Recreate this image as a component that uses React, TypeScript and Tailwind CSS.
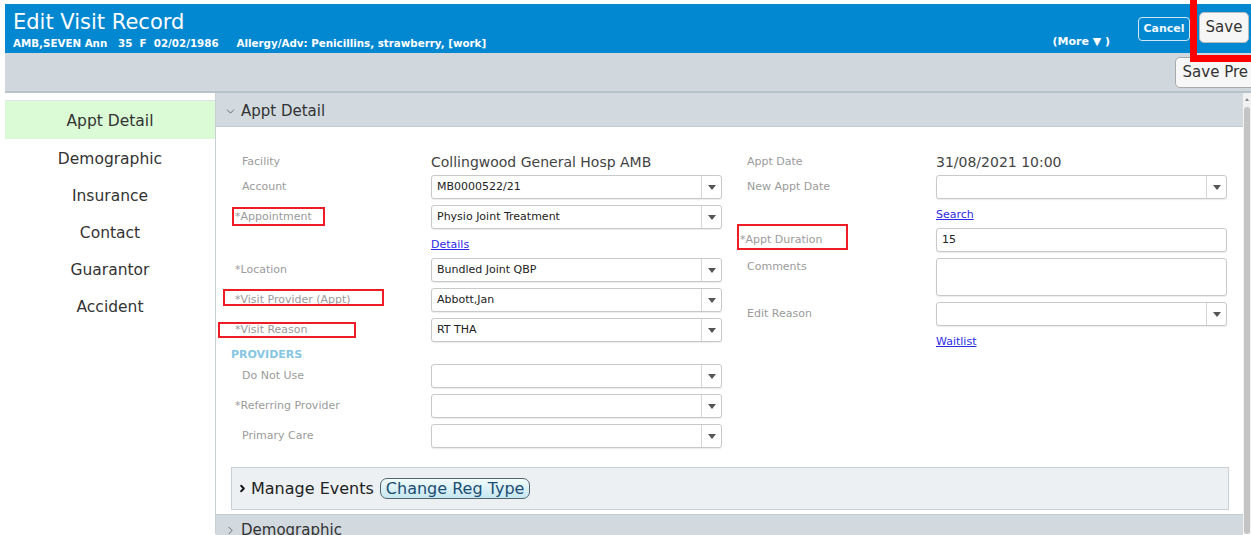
import { ChevronDown, ChevronRight } from "lucide-react";
import type { ReactNode } from "react";

const NAV = ["Demographic", "Insurance", "Contact", "Guarantor", "Accident"];

function Caret() {
  return (
    <span className="h-0 w-0 border-x-[4px] border-t-[5px] border-x-transparent border-t-[#555]" />
  );
}

function Select({ value }: { value?: string }) {
  return (
    <div className="flex h-[24px] w-[291px] items-stretch rounded-[3px] border border-[#c9c9c9] bg-white shadow-[0_1px_1px_rgba(0,0,0,0.08)]">
      <div className="flex flex-1 items-center pl-[5px] text-[11px] text-[#222]">{value}</div>
      <div className="flex w-[20px] items-center justify-center border-l border-[#d6d6d6]">
        <Caret />
      </div>
    </div>
  );
}

function Input({ value, tall }: { value?: string; tall?: boolean }) {
  return (
    <div
      className={`flex w-[291px] rounded-[3px] border border-[#c9c9c9] bg-white pl-[5px] text-[11px] text-[#222] shadow-[0_1px_1px_rgba(0,0,0,0.08)] ${
        tall ? "h-[38px] items-start" : "h-[24px] items-center"
      }`}
    >
      {value}
    </div>
  );
}

function Label({ text, req }: { text: string; req?: boolean }) {
  return (
    <div className="w-[189px] shrink-0 text-[11px] text-[#9b9b9b]">
      {req && <span className="-ml-[7px]">*</span>}
      {text}
    </div>
  );
}

function Row({ className, children }: { className?: string; children: ReactNode }) {
  return <div className={`flex items-center ${className ?? ""}`}>{children}</div>;
}

function LinkRow({ className, text }: { className?: string; text: string }) {
  return (
    <div className={`flex h-[16px] items-center pl-[189px] ${className ?? ""}`}>
      <a className="text-[11px] text-[#2b2be6] underline">{text}</a>
    </div>
  );
}

export default function App() {
  return (
    <div className="relative h-[535px] w-[1251px] overflow-hidden bg-white pl-[5px] pt-[4px] font-['DejaVu_Sans',Verdana,sans-serif]">
      {/* Title bar */}
      <header className="flex h-[49px] bg-[#0288d1] text-white">
        <div className="pl-[8px] pt-[6px]">
          <div className="text-[21px] leading-[24px]">Edit Visit Record</div>
          <div className="mt-[3px] whitespace-pre text-[10.3px] font-bold leading-[12px]">
            {"AMB,SEVEN Ann   35  F  02/02/1986     Allergy/Adv: Penicillins, strawberry, [work]"}
          </div>
        </div>
        <div className="ml-auto flex items-start">
          <span className="mr-[28px] mt-[32px] text-[11px] font-bold leading-[12px]">(More ▼ )</span>
          <button className="mt-[13px] h-[24px] w-[52px] rounded-[4px] border border-[#cfe6f4] text-[11px] font-bold text-[#eef7fc]">
            Cancel
          </button>
          <button className="ml-[9px] mr-[2px] mt-[8px] h-[31px] w-[50px] rounded-[5px] border border-[#bbb] bg-[#f6f6f6] text-[15px] text-[#333]">
            Save
          </button>
        </div>
      </header>

      {/* Toolbar */}
      <div className="flex h-[40px] justify-end border-b-2 border-[#b8c2c9] bg-[#d0d8de]">
        <button className="-mr-[8px] mt-[4px] h-[31px] rounded-[5px] border border-[#aaa] bg-[#f7f7f7] pl-[7px] pr-[10px] text-[15px] text-[#333]">
          Save Pre
        </button>
      </div>

      <div className="flex">
        {/* Side nav */}
        <nav className="w-[210px] shrink-0 pt-[7px] text-[15.5px] text-[#333]">
          <div className="flex h-[39px] items-center justify-center border-t border-[#dde3e6] bg-[#dafbd5] pt-[3px]">
            Appt Detail
          </div>
          {NAV.map((n) => (
            <div key={n} className="flex h-[37px] items-center justify-center pt-[5px]">
              {n}
            </div>
          ))}
        </nav>

        <main className="flex h-[441px] flex-1 flex-col border-l border-[#c9d0d4]">
          <div className="flex h-[34px] shrink-0 items-center border-b border-[#c3cbd1] bg-[#d2dadf] pl-[8px] pt-[3px] text-[15px] text-[#333]">
            <ChevronDown size={13} strokeWidth={1.5} className="text-[#555]" />
            <span className="ml-[4px]">Appt Detail</span>
          </div>

          <div className="flex">
            {/* Left column */}
            <div className="w-[519px] shrink-0 pl-[26px]">
              <Row className="mt-[23px] h-[24px]">
                <Label text="Facility" />
                <span className="text-[14px] text-[#444]">Collingwood General Hosp AMB</span>
              </Row>
              <Row className="mt-[1px]">
                <Label text="Account" />
                <Select value="MB0000522/21" />
              </Row>
              <Row className="mt-[6px]">
                <Label text="Appointment" req />
                <Select value="Physio Joint Treatment" />
              </Row>
              <LinkRow className="mt-[8px]" text="Details" />
              <Row className="mt-[5px]">
                <Label text="Location" req />
                <Select value="Bundled Joint QBP" />
              </Row>
              <Row className="mt-[6px]">
                <Label text="Visit Provider (Appt)" req />
                <Select value="Abbott,Jan" />
              </Row>
              <Row className="mt-[6px]">
                <Label text="Visit Reason" req />
                <Select value="RT THA" />
              </Row>
              <div className="-ml-[11px] mt-[6px] h-[14px] text-[11px] font-bold leading-[14px] text-[#86c6e2]">
                PROVIDERS
              </div>
              <Row className="mt-[2px]">
                <Label text="Do Not Use" />
                <Select />
              </Row>
              <Row className="mt-[6px]">
                <Label text="Referring Provider" req />
                <Select />
              </Row>
              <Row className="mt-[6px]">
                <Label text="Primary Care" />
                <Select />
              </Row>
            </div>

            {/* Right column */}
            <div className="flex-1 pl-[12px]">
              <Row className="mt-[23px] h-[24px]">
                <Label text="Appt Date" />
                <span className="text-[14px] text-[#444]">31/08/2021 10:00</span>
              </Row>
              <Row className="mt-[1px]">
                <Label text="New Appt Date" />
                <Select />
              </Row>
              <LinkRow className="mt-[8px]" text="Search" />
              <Row className="mt-[5px]">
                <Label text="Appt Duration" req />
                <Input value="15" />
              </Row>
              <div className="mt-[6px] flex items-start">
                <div className="mt-[1px]">
                  <Label text="Comments" />
                </div>
                <Input tall />
              </div>
              <Row className="mt-[6px]">
                <Label text="Edit Reason" />
                <Select />
              </Row>
              <LinkRow className="mt-[8px]" text="Waitlist" />
            </div>
          </div>

          {/* Manage events bar */}
          <div className="ml-[15px] mr-[14px] mt-[19px] flex h-[43px] shrink-0 items-center border border-[#c9d1d6] bg-[#ecf0f2] pl-[5px] text-[16px] text-[#222]">
            <ChevronRight size={11} strokeWidth={4} className="text-[#111]" />
            <span className="ml-[3px]">Manage Events</span>
            <button className="ml-[6px] h-[21px] rounded-[7px] border border-[#55656e] bg-gradient-to-b from-[#f1fbfd] to-[#c6e7f0] px-[5px] text-[16px] leading-[18px] text-[#1c4d73]">
              Change Reg Type
            </button>
          </div>

          <div className="mt-[4px] flex h-[34px] shrink-0 items-start border-t border-[#c3cbd1] bg-[#d2dadf] pl-[8px] pt-[6px] text-[15px] leading-[18px] text-[#333]">
            <ChevronRight size={13} strokeWidth={1.5} className="mt-[3px] text-[#555]" />
            <span className="ml-[4px]">Demographic</span>
          </div>
        </main>

        {/* Scrollbar */}
        <div className="flex h-[441px] w-[8px] shrink-0 flex-col items-center bg-[#f1f1f1]">
          <span className="mt-[5px] h-0 w-0 border-x-[2px] border-b-[3px] border-x-transparent border-b-[#888]" />
          <div className="mt-[6px] w-[6px] flex-1 rounded-[3px] bg-[#c4c4c4]" />
        </div>
      </div>

      {/* Highlight boxes */}
      <div className="absolute left-[1190px] top-[-10px] h-[72px] w-[80px] border-[7px] border-[#ff0000]" />
      <div className="absolute left-[232px] top-[207px] h-[19px] w-[93px] border-2 border-[#ee1c25]" />
      <div className="absolute left-[223px] top-[289px] h-[17px] w-[161px] border-2 border-[#ee1c25]" />
      <div className="absolute left-[218px] top-[322px] h-[16px] w-[138px] border-2 border-[#ee1c25]" />
      <div className="absolute left-[737px] top-[224px] h-[26px] w-[111px] border-2 border-[#ee1c25]" />
    </div>
  );
}
